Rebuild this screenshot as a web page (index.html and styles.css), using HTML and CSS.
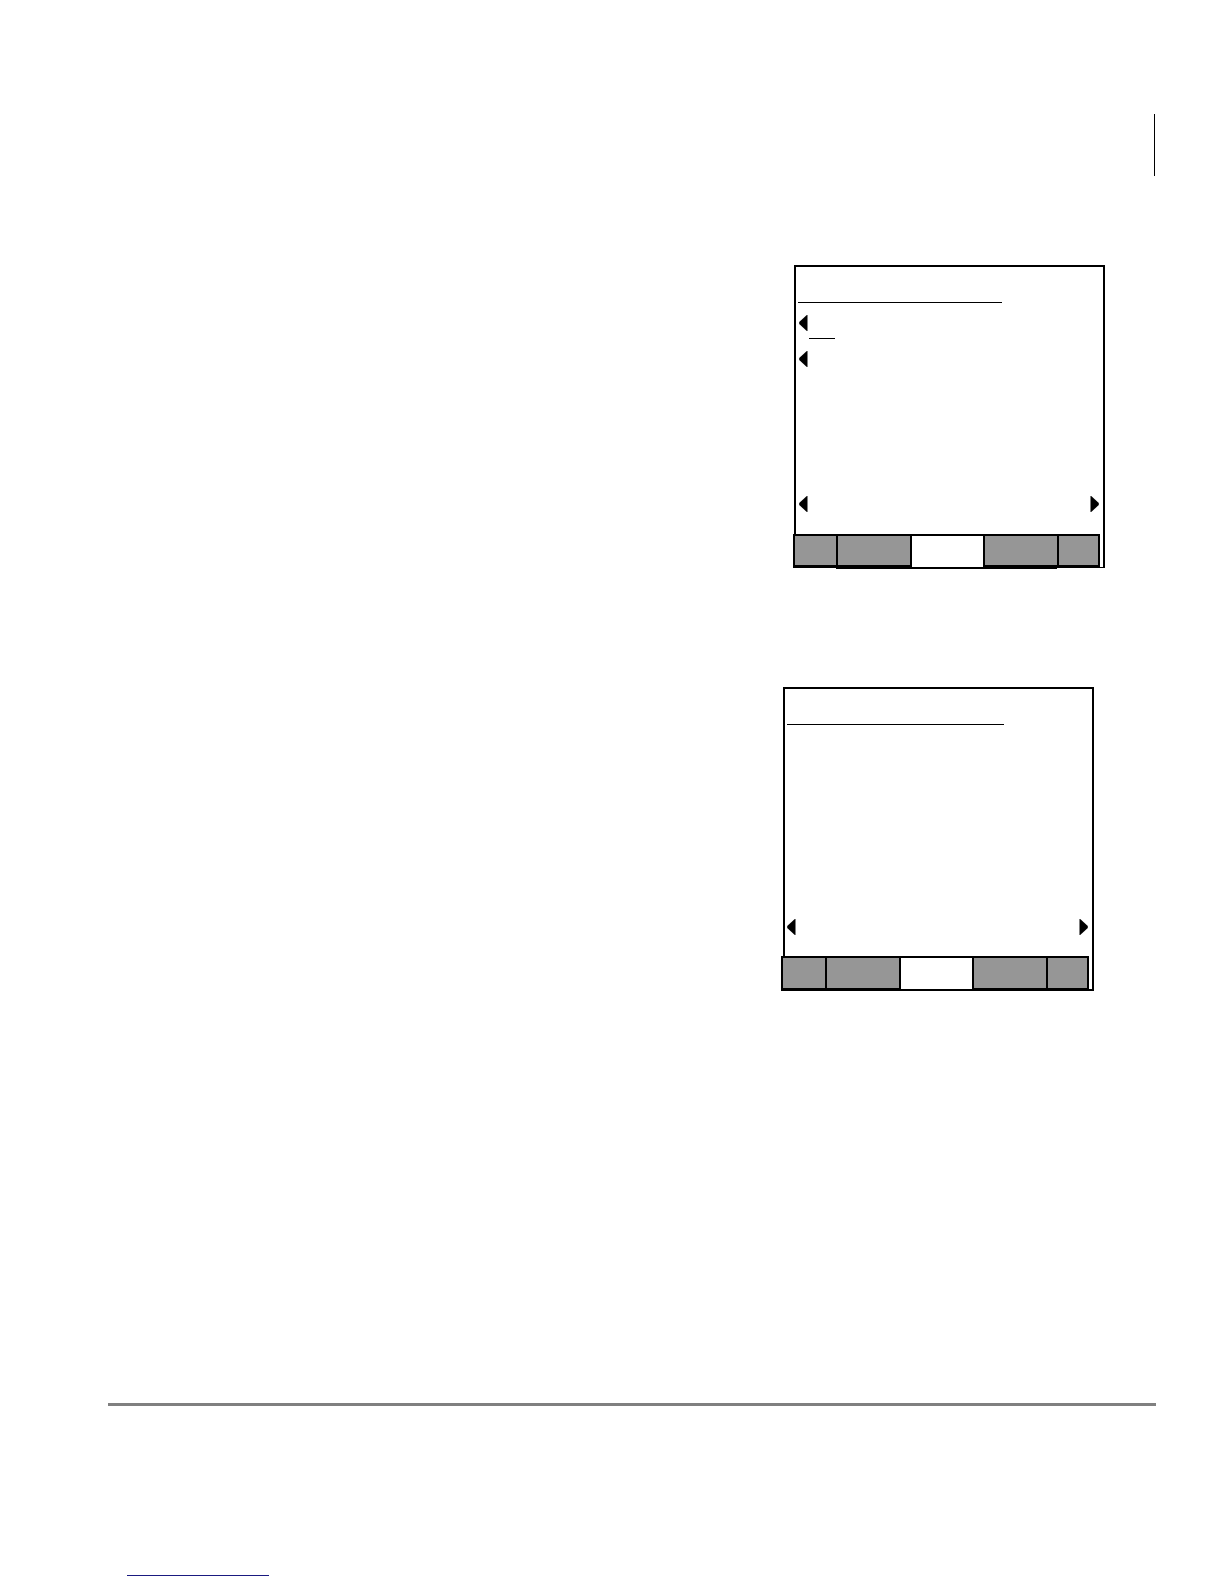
FILE: index.html
```html
<!DOCTYPE html>
<html lang="en">
<head>
<meta charset="utf-8">
<meta name="viewport" content="width=device-width, initial-scale=1">
<title>Display screens</title>
<link rel="stylesheet" href="styles.css">
</head>
<body>
<div class="page">
  <header class="page-head"></header>
  <main class="screens">
    <section class="screen screen-options">
      <div class="title"></div>
      <div class="options">
        <div class="option">
          <button class="arrow" type="button" aria-label="First option"><svg viewBox="0 0 9 16"><path d="M8.5 0V16H7.8L0.2 9V7L7.8 0Z"/></svg></button>
          <span class="value"></span>
        </div>
        <div class="option">
          <button class="arrow" type="button" aria-label="Second option"><svg viewBox="0 0 9 16"><path d="M8.5 0V16H7.8L0.2 9V7L7.8 0Z"/></svg></button>
        </div>
      </div>
      <div class="nav">
        <button class="arrow" type="button" aria-label="Back"><svg viewBox="0 0 9 16"><path d="M8.5 0V16H7.8L0.2 9V7L7.8 0Z"/></svg></button>
        <button class="arrow" type="button" aria-label="Next"><svg viewBox="0 0 9 16"><path d="M0.5 0V16H1.2L8.8 9V7L1.2 0Z"/></svg></button>
      </div>
      <div class="keys">
        <button class="key" type="button" aria-label="Key 1"></button>
        <button class="key key-deep" type="button" aria-label="Key 2"></button>
        <button class="key key-active" type="button" aria-label="Key 3"></button>
        <button class="key key-deep" type="button" aria-label="Key 4"></button>
        <button class="key" type="button" aria-label="Key 5"></button>
      </div>
    </section>
    <section class="screen screen-message">
      <div class="title"></div>
      <div class="nav">
        <button class="arrow" type="button" aria-label="Back"><svg viewBox="0 0 9 16"><path d="M8.5 0V16H7.8L0.2 9V7L7.8 0Z"/></svg></button>
        <button class="arrow" type="button" aria-label="Next"><svg viewBox="0 0 9 16"><path d="M0.5 0V16H1.2L8.8 9V7L1.2 0Z"/></svg></button>
      </div>
      <div class="keys">
        <button class="key" type="button" aria-label="Key 1"></button>
        <button class="key" type="button" aria-label="Key 2"></button>
        <button class="key key-active" type="button" aria-label="Key 3"></button>
        <button class="key" type="button" aria-label="Key 4"></button>
        <button class="key" type="button" aria-label="Key 5"></button>
      </div>
    </section>
  </main>
  <footer class="page-foot">
    <a class="foot-link" href="#" aria-label="Website"></a>
  </footer>
</div>
</body>
</html>
```
FILE: styles.css
```css
* {
  box-sizing: border-box;
}

body {
  margin: 0;
  background: #fff;
  font-family: "Liberation Sans", Arial, sans-serif;
}

button {
  margin: 0;
  padding: 0;
  border: 0;
  background: none;
}

.page {
  display: flex;
  flex-direction: column;
  min-height: 100vh;
  padding: 114px 68px 8px 108px;
}

.page-head {
  min-height: 62px;
  margin-right: 1px;
  border-right: 1px solid #000;
}

.screens {
  display: flex;
  flex: 1;
  flex-direction: column;
  align-items: flex-end;
  gap: 119px;
  padding: 89px 0 0;
}

.screen {
  display: flex;
  flex-direction: column;
  width: 311px;
  border: 2px solid #000;
}

.screen-options {
  min-height: 303px;
  margin-right: 51px;
  border-bottom-width: 1px;
}

.screen-message {
  min-height: 304px;
  margin-right: 62px;
}

.title {
  width: 204px;
  min-height: 36px;
  margin-left: 2px;
  border-bottom: 1px solid #000;
}

.screen-message .title {
  width: 217px;
}

.options {
  display: flex;
  flex-direction: column;
  gap: 12px;
  padding: 12px 3px;
}

.option {
  display: flex;
  align-items: flex-start;
  gap: 1px;
}

.value {
  width: 26px;
  height: 24px;
  border-bottom: 1px solid #000;
}

.arrow {
  width: 9px;
  height: 16px;
}

.arrow svg {
  display: block;
  width: 9px;
  height: 16px;
  fill: #000;
}

.nav {
  display: flex;
  justify-content: space-between;
  margin-top: auto;
  padding: 0 4px 22px 3px;
}

.screen-message .nav {
  padding: 0 4px 21px 2px;
}

.keys {
  display: grid;
  grid-template-columns: 43px 74px 73px 74px 43px;
  align-items: start;
  margin: 0 0 -2px -3px;
}

.screen-message .keys {
  grid-template-columns: 44px 74px 73px 74px 43px;
  margin-left: -4px;
}

.key {
  height: 34px;
  border: solid #000;
  border-width: 2px 0 3px 2px;
  background: #969696;
}

.key:last-child {
  border-right-width: 2px;
}

.key-deep {
  height: 35px;
  border-bottom-width: 4px;
}

.key-active {
  height: 35px;
  border-bottom-width: 2px;
  background: #fff;
}

.screen-message .key {
  height: 35px;
}

.page-foot {
  display: flex;
  align-items: flex-end;
  min-height: 173px;
  padding-left: 19px;
  border-top: 3px solid #808080;
}

.foot-link {
  width: 142px;
  height: 20px;
  border-bottom: 1px solid #1a1a80;
}
```
